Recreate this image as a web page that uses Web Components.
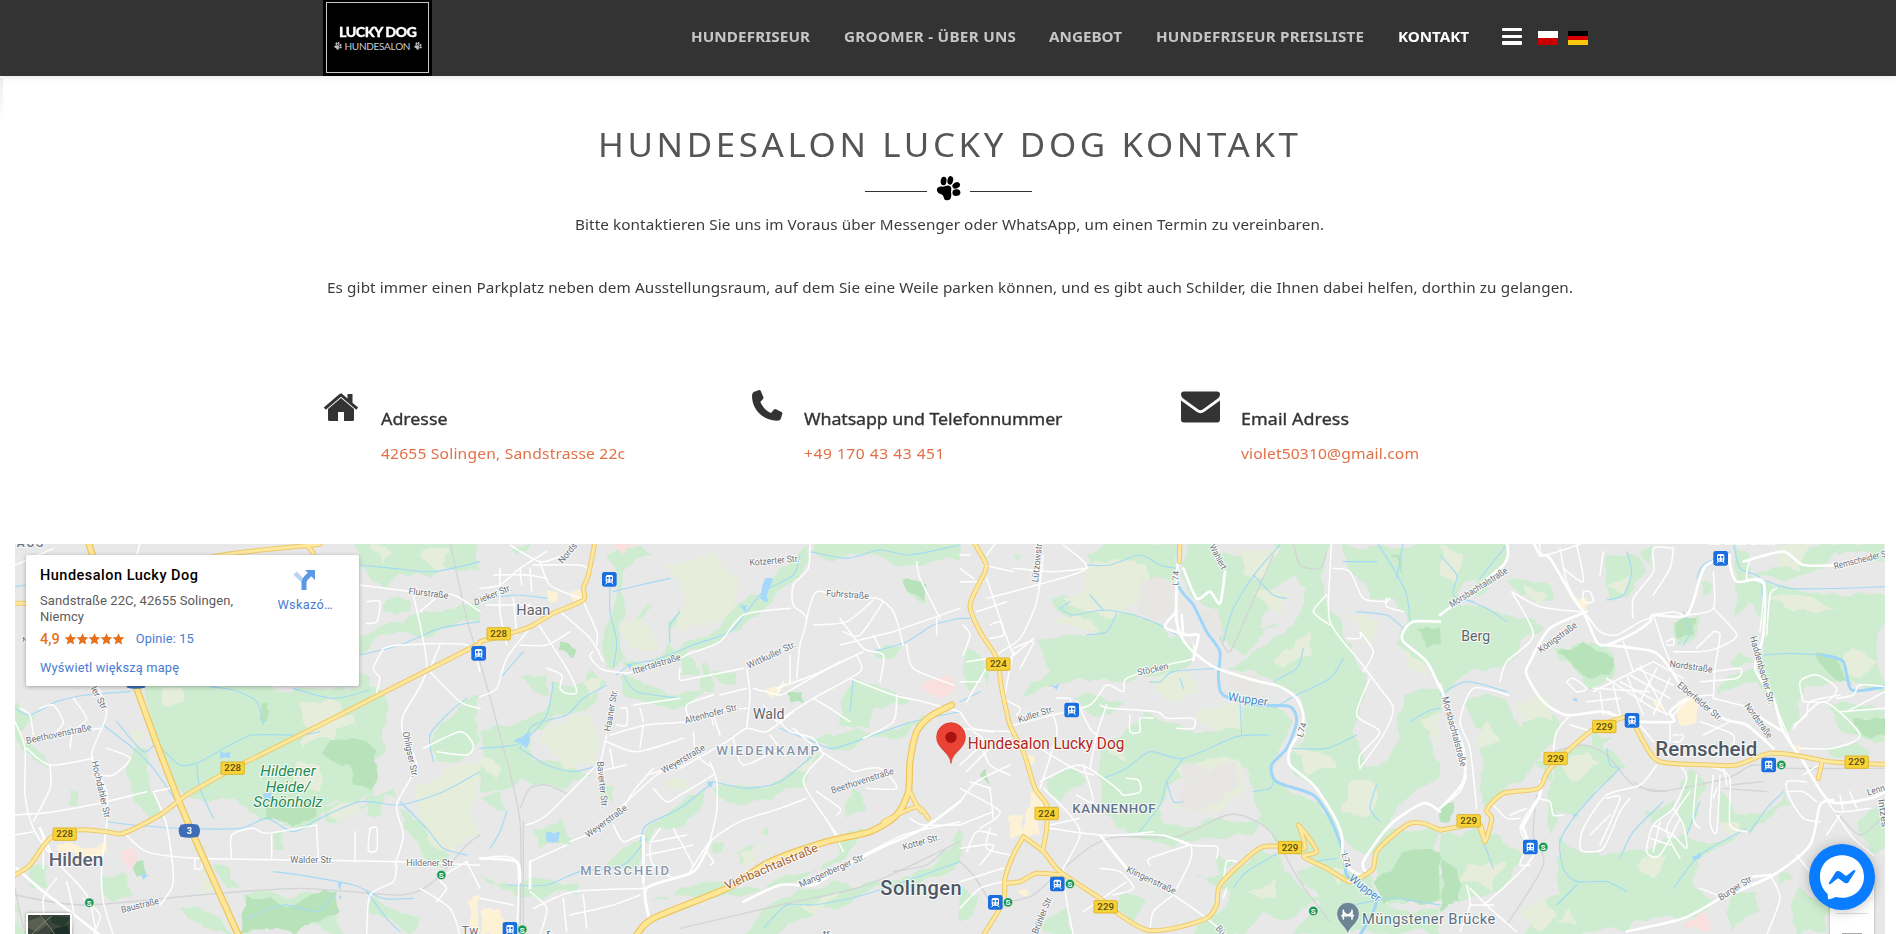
<!DOCTYPE html>
<html lang="de">
<head>
<meta charset="utf-8">
<title>Hundesalon Lucky Dog Kontakt</title>
<style>
html,body{margin:0;height:100%;overflow:hidden;background:#fff}
body{font-family:"Noto Sans","Open Sans",sans-serif;color:#333}
</style>
</head>
<body>
<salon-page></salon-page>
<script>
const define=(name,html,init)=>customElements.define(name,class extends HTMLElement{
  constructor(){super();this.attachShadow({mode:'open'}).innerHTML=html;}
  connectedCallback(){if(init)init.call(this,this.shadowRoot);}
});

/* Text run tracked out to a given width; x widens the letters themselves */
define('fit-text',`<style>:host{display:inline-block;white-space:nowrap;vertical-align:top}span{display:inline-block;transform-origin:0 50%}</style><span><slot></slot></span>`,function(r){
  const s=r.querySelector('span'),w=+this.getAttribute('w'),x=+(this.getAttribute('x')||1),n=this.textContent.length;
  const nat=s.getBoundingClientRect().width;
  s.style.letterSpacing=((w/x-nat)/(n-1))+'px';
  if(x!==1)s.style.transform=`scaleX(${x})`;
  this.style.width=w+'px';
});

define('paw-print',`<style>:host{display:block}svg{display:block;width:100%;height:100%}</style>
<svg viewBox="0 0 25 25" fill="currentColor"><ellipse cx="7.6" cy="5" rx="2.9" ry="4.3" transform="rotate(8 7.6 5)"/><ellipse cx="14.3" cy="4.4" rx="2.8" ry="4.3" transform="rotate(12 14.3 4.4)"/><ellipse cx="20.2" cy="9.4" rx="4" ry="3" transform="rotate(-28 20.2 9.4)"/><ellipse cx="20.4" cy="16.6" rx="4" ry="3.3" transform="rotate(-10 20.4 16.6)"/><path d="M1 14.5c-.6-3.4 3.2-4.3 6-3.8 2-.2 4-1.800 6.200-.9 2.700 1 2.300 3.900 1.800 6 .3 2.400.7 4.300-.4 6.800-1 2.200-5.100 2.300-6.300.3-.8-1.400-.7-3-1.800-3.900C4.700 17.700 1.500 17.500 1 14.500z"/></svg>`);

define('site-logo',`<style>:host{display:flex;width:109px;height:76px;background:#000;box-sizing:border-box;padding:2px 3px 3px}
.b{flex:1;border:1px solid #c9c9c9;display:flex;flex-direction:column;align-items:center;color:#fff;padding-top:20px}
.a{font:900 13.500px/18px Lato,sans-serif;height:16px;-webkit-text-stroke:.3px #fff}.c{display:flex;align-items:center;gap:3px;font:400 10px/14px Lato,sans-serif;color:#ccc}
paw-print{width:8px;height:8px;color:#c0c0c0}</style>
<div class="b"><div class="a"><fit-text w="78" x="1.060">LUCKY DOG</fit-text></div><div class="c"><paw-print></paw-print><fit-text w="66">HUNDESALON</fit-text><paw-print></paw-print></div></div>`);

define('site-header',`<style>:host{display:block;background:#333;height:76px;box-shadow:0 1px 6px rgba(90,60,100,.14);position:relative}
.in{display:flex;height:76px;padding-left:323px;align-items:flex-start}
nav{display:flex;gap:33.700px;margin-left:259px;padding-top:26px;font-weight:700;font-size:14.500px;line-height:21px;color:#c6c6c6}
.on{color:#fff}
.m{width:20px;display:grid;gap:3.500px;margin:28px 16px 0 33px}.m i{height:3.200px;background:#fff;border-radius:1px}
.f{width:20px;height:14px;margin:31px 10px 0 0}
.pl{background:linear-gradient(#fff 50%,#c80000 50%)}.de{background:linear-gradient(#000 33%,#d80000 33% 66%,#f9c80e 66%)}</style>
<div class="in"><site-logo></site-logo><nav><fit-text w="119" x="1.050">HUNDEFRISEUR</fit-text><fit-text w="172" x="1.050">GROOMER - ÜBER UNS</fit-text><fit-text w="73" x="1.050">ANGEBOT</fit-text><fit-text w="208" x="1.050">HUNDEFRISEUR PREISLISTE</fit-text><fit-text w="71" x="1.050" class="on">KONTAKT</fit-text></nav>
<div class="m"><i></i><i></i><i></i></div><div class="f pl"></div><div class="f de"></div></div>`);

define('page-intro',`<style>:host{display:flex;flex-direction:column;align-items:center}
h1{margin:47px 0 0;font-weight:400;font-size:32px;line-height:44px;height:44px;color:#555}
.d{display:flex;align-items:center;height:26px;margin-top:10px;padding-left:1px}.d i{width:62px;height:1px;background:#333;margin-top:3px}.d paw-print{width:25px;height:25px;color:#000;margin:-3px 9px 0}
p{margin:0;font-size:14.800px;line-height:22px;padding-left:3px;color:#3b3b3b}.a{margin-top:10px}.b{margin-top:41px}</style>
<h1><fit-text w="700" x="1.090">HUNDESALON LUCKY DOG KONTAKT</fit-text></h1>
<div class="d"><i></i><paw-print></paw-print><i></i></div>
<p class="a"><fit-text w="749" x="1.030">Bitte kontaktieren Sie uns im Voraus über Messenger oder WhatsApp, um einen Termin zu vereinbaren.</fit-text></p>
<p class="b"><fit-text w="1246" x="1.030">Es gibt immer einen Parkplatz neben dem Ausstellungsraum, auf dem Sie eine Weile parken können, und es gibt auch Schilder, die Ihnen dabei helfen, dorthin zu gelangen.</fit-text></p>`);

define('contact-item',`<style>:host{display:flex;align-items:flex-start}
.t{padding-top:18px}.h{font-size:17px;line-height:24px;-webkit-text-stroke:.35px #333;height:35px}.v{font-size:15px;line-height:22px;color:#e27046}</style>
<slot name="icon"></slot><div class="t"><div class="h"><slot name="title"></slot></div><div class="v"><slot></slot></div></div>`);

define('contact-row',`<style>:host{display:grid;grid-template-columns:429px 429px 429px;padding-left:323px;height:90px}
svg{display:block;fill:#333;flex:none}</style>
<contact-item><svg slot="icon" width="57.500" height="36" viewBox="0 0 57.500 36"><path d="M18 9 31 20v10.500a1.500 1.500 0 0 1-1.500 1.500H21V23h-6v9H6.500A1.500 1.500 0 0 1 5 30.500V20z"/><path d="m18 4 6.500 5.500V5h5v8.700l5.700 4.800-2 2.200L18 7.800 2.800 20.700l-2-2.200L16.200 5.200Q18 3.700 18 5z"/></svg><fit-text slot="title" w="66.500" x="1.050">Adresse</fit-text><fit-text w="244" x="1.040">42655 Solingen, Sandstrasse 22c</fit-text></contact-item>
<contact-item><svg slot="icon" width="52" height="36" viewBox="0 0 52 36"><path d="M3 2.500 7 1q1.200-.4 1.700.8l2.700 6.400q.4 1.200-.6 2L8.300 13q3.700 8 10.800 11l2.900-3.400q.9-1 2-.4l5.500 2.900q1.200.7.8 1.800l-1.600 5q-.5 1.300-2 1.700C11 32.600 0 20 0 7q0-3.600 3-4.500z"/></svg><fit-text slot="title" w="258.500" x="1.050">Whatsapp und Telefonnummer</fit-text><fit-text w="140.500" x="1.040">+49 170 43 43 451</fit-text></contact-item>
<contact-item><svg slot="icon" width="60" height="36" viewBox="0 0 60 36"><path d="M3 2.500h33Q39 2.500 39 5.500q0 2.300-2.500 4.200L22 20.300q-2.500 1.800-5 0L2.500 9.700Q0 7.800 0 5.500 0 2.500 3 2.500z"/><path d="M0 11.500 16 23q3.500 2.300 7 0L39 11.500V30.500q0 3-3 3H3Q0 33.500 0 30.500z"/></svg><fit-text slot="title" w="108" x="1.050">Email Adress</fit-text><fit-text w="178" x="1.040">violet50310@gmail.com</fit-text></contact-item>`);

/* ---- Map artwork: four sheets, each 1440 units wide, three units to a pixel ---- */
let seed=7;const rnd=()=>(seed=(seed*16807)%2147483647)/2147483647-.5;
const pts=s=>s.trim().split(/\s+/).map(p=>p.split(',').map(Number));
function rough(s,depth=3){
  let p=pts(s);
  for(let k=0;k<depth;k++){const q=[];p.forEach((a,i)=>{const b=p[(i+1)%p.length],dx=b[0]-a[0],dy=b[1]-a[1],r=rnd()*.34;q.push(a);if(Math.hypot(dx,dy)>16)q.push([(a[0]+b[0])/2-dy*r,(a[1]+b[1])/2+dx*r]);});p=q;}
  return 'M'+p.map(a=>a[0].toFixed(0)+','+a[1].toFixed(0)).join('L')+'Z';
}
function curve(s){const p=pts(s);if(p.length<3)return 'M'+p.join('L');let d='M'+p[0];
  for(let i=1;i<p.length;i++){const a=p[i-1],b=p[i],z=p[i-2]||a,c=p[i+1]||b,t=.13;
  d+=`C${a[0]+(b[0]-z[0])*t},${a[1]+(b[1]-z[1])*t} ${b[0]-(c[0]-a[0])*t},${b[1]-(c[1]-a[1])*t} ${b}`;}return d;}

const sheets=[
{ g:['1060,20 1440,20 1440,110 1330,90 1290,130 1200,115 1150,165 1080,90','430,455 900,455 1130,455 1160,540 1160,640 1110,700 1120,780 1000,800 960,860 880,880 780,860 700,790 620,800 545,770 500,690 450,560','1080,300 1150,270 1380,210 1440,190 1440,260 1330,280 1180,300 1080,360','1160,195 1230,195 1230,232 1150,230','1360,540 1440,480 1440,620 1380,680 1310,680 1300,600','40,500 110,540 60,590 150,700 110,680 45,590','400,640 440,640 450,760 490,850 430,830 390,760','640,990 690,1000 720,1060 680,1060','730,1080 1010,1070 1030,1200 740,1200','960,820 1190,790 1180,760 1110,800 980,860','1200,820 1290,870 1350,960 1330,1000 1260,940 1210,880','310,1020 370,1010 400,1080 340,1100 305,1080','45,1100 100,1200 45,1200','1130,1080 1260,1150 1230,1200 1100,1130','210,760 235,770 235,815 205,810','820,895 850,895 850,945 820,945','90,990 145,990 140,1060 95,1060','1095,780 1155,780 1145,842 1100,840','560,940 620,930 610,970','540,1120 640,1140 700,1200 620,1180','1050,420 1110,430 1100,500 1140,560 1060,590'],
  d:['965,655 990,615 1080,615 1130,650 1115,765 1060,750 1050,690','800,800 960,790 940,850 880,875 800,850','785,505 803,500 800,560 778,555','740,1080 1010,1070 1020,1130 940,1160 880,1200 720,1200','400,980 430,975 440,1015 410,1025'],
  b:['1260,60 1350,40 1330,120','490,460 545,455 550,500 490,510','900,500 990,480 1040,540 1000,620 930,600','1060,540 1070,570 910,640 900,625','890,680 960,690 960,770 900,770','1240,750 1440,690 1440,900 1330,950 1260,850','1110,30 1180,50 1150,90','380,560 440,600 390,640','980,830 1060,800 1090,830 1010,860','600,1010 650,1060 610,1090'],
  y:['170,930 320,915 320,950 180,955','1400,1100 1440,1080 1440,1190 1410,1180'],k:['360,950 400,940 410,980 380,1000'],
  w:['660,650 690,650 690,670 660,672','790,775 815,775 815,795 790,795','425,1015 445,1020 430,1035','1015,1040 1025,1045 1025,1090 1015,1090'],
  r:['45,520 90,540 170,500 260,480 390,470','350,560 430,650 470,630 540,690 600,680 690,630 760,600 900,600 960,590','590,690 600,760 640,850','310,570 400,640 460,700 530,800','320,860 400,870 540,880 720,880 800,850 880,890 960,850 1080,800 1200,810 1330,770 1440,710','1200,800 1280,880 1330,940 1400,960','820,1010 900,1020 1060,1050 1150,1090 1240,1090','630,455 700,465 770,500 790,570','1080,360 1200,330 1320,280 1440,260','1080,90 1180,100 1300,110 1440,80','880,460 1000,490 1110,465','1300,680 1290,600 1350,530 1400,490','45,155 80,150','740,1150 850,1110 950,1130 1000,1080','1100,1070 1160,1150 1200,1190'],
  s:['45,560 75,640 75,780 100,880 160,970 260,1080 290,1200','320,870 305,1000 310,1100 340,1200','260,390 320,530 275,660 320,770 320,870','75,620 150,600 300,580','80,640 150,690 280,670','150,690 150,760 100,860','320,640 390,670 340,720 290,720','45,840 160,830 320,800 440,770','460,770 510,760','460,770 500,870 520,1040 480,1110','370,890 440,950 590,970 930,975 1200,980 1440,990','695,970 695,900 760,880 800,895 950,870','815,900 815,970','950,875 955,970','1065,890 1065,980','1110,880 1130,880 1130,945 1105,945 1110,880','585,970 585,1000 605,1000 605,975','1240,180 1280,400 1210,540 1210,600 1250,690 1190,810 1210,900 1185,990','1080,150 1240,170 1360,180 1440,230','1280,400 1380,500 1440,520','1150,340 1200,330 1400,330 1440,410','1150,340 1120,400 1140,430 1130,475 1170,470','1190,990 1180,1040 1110,1080 1100,1200','1270,640 1380,590 1420,630 1400,660 1310,650','1310,1100 1340,1060 1320,1030 1400,980','1260,1060 1350,1120 1380,1200','1100,200 1140,200 1130,260 1100,265','1260,230 1330,170','100,600 90,540 60,520','120,520 160,510 190,560 170,590','220,490 260,550 230,580','45,90 160,40','170,1030 130,1090 140,1200','200,1040 220,1130 210,1200','250,1090 300,1140 280,1200','1400,980 1440,1060','130,900 130,1000','45,900 100,890','215,600 210,640','410,60 420,25','1320,330 1290,400'],
  S:['50,1000 130,1070 210,1130 300,1200','120,880 160,970'],
  yel:['45,1020 90,990 150,910 230,885 320,890 370,895 480,840 560,780 700,700 780,660 1000,550 1440,325','45,205 80,205','500,95 700,55 960,28','925,35 940,55','370,895 380,890'],
  Y:['265,20 290,100 410,460 550,830 715,1200'],
  rail:['45,1080 250,1110 600,1080 900,1060 1200,1080 1300,1040 1400,930 1440,900','1350,20 1400,250 1440,380','45,1060 70,1180'],
  t:[['N',75,320,20,0,24],['Flurstraße',1284,184,120,7],['Beethovenstraße',178,606,200,-12],['ler Str.',290,495,80,62],['Hochdahler Str.',295,768,180,77],['Ohligser Str.',1222,660,140,78],['Walder Str.',936,985,130,0],['Hildener Str.',1292,992,146,0],['Baustraße',422,1120,116,-14],['Hilden',228,994,164,0,53,'#5b6270',500],['Hildener',864,724,166,0,43,'#1f8a54','i'],['Heide/',864,770,134,0,43,'#1f8a54','i'],['Schönholz',864,817,208,0,43,'#1f8a54','i'],['AUS',90,36,80,0,36,'#6c7480',500],['Tw',1410,1200,50,0,36],['D',1432,210,16,-10]],
  sh:[[698,699,'228'],[194,897,'228']],au:[[568,887,'3'],[408,440,'']],tr:[[1436,355]],sb:[[1324,1020],[268,1103]]
},
{ g:['20,20 170,20 110,60 90,30','380,60 480,30 520,60 430,110 420,170 440,230 420,300 440,370 380,400 370,300 400,220','420,380 560,350 700,290 770,210 860,170 900,100 990,30 960,120 870,210 790,270 700,330 560,380 480,400','0,590 120,560 200,520 210,440 280,460 330,400 380,440 340,510 220,540 150,600 160,680 280,700 340,720 260,760 120,730 0,770','420,420 560,480 680,460 640,500 500,505 430,480','1000,20 1440,20 1440,75 1300,90 1190,60 1060,80 1000,50','1265,130 1340,150 1335,210 1290,180','560,260 600,215 570,330 600,350 540,370','1130,430 1290,500 1180,520 1170,580 1080,570','700,760 860,760 960,700 1020,650 970,760 880,790 740,800','1000,620 1130,580 1280,560 1400,520 1280,600 1120,640','580,820 680,760 660,830 520,880 490,960 450,1010 380,990 460,920','160,880 240,850 280,920 180,940','500,1100 600,1060 700,1040 1000,1010 1080,950 1070,910 1150,880 1040,1000','880,1100 960,1060 1140,1060 1300,1020 1420,930 1440,880 1440,980 1300,1060 1100,1110 960,1150 890,1200 790,1200','1100,800 1120,760 1160,820 1100,850','0,1020 100,1050 300,1050 290,1080 60,1060','590,350 640,370 660,420 600,420','690,410 770,410 770,450 740,450','1180,340 1270,330 1240,370 1190,370','500,210 530,200 480,270 465,265','120,420 200,420 210,480 150,450','770,950 820,930 810,990 780,985','700,920 730,920 725,950 700,955','360,740 400,750 400,800 370,800','0,790 60,770 80,830 30,810','850,880 865,880 865,900 850,900','670,380 690,400 700,470 660,460'],
  d:['240,320 290,345 280,370 235,345','1270,135 1340,150 1335,200 1290,175','920,470 965,470 970,505 930,500'],
  b:['550,90 700,50 780,150 740,240 600,290 620,200','170,620 330,540 360,620 350,690 250,700','430,260 480,250 540,330 450,340','1330,0 1400,30 1420,40','310,440 370,430 330,490','560,740 600,730 630,760 570,760','940,700 1000,650 1020,640 970,710','780,950 850,920 820,990 790,990','0,670 60,690 50,740','1330,690 1360,690','920,1100 1080,1070 1000,1140'],
  y:['270,170 320,170 320,200 280,200','200,165 230,170 230,200 210,200','850,465 940,440 870,490','0,1130 60,1120 100,1200 0,1200'],k:['1330,440 1410,420 1430,460 1380,490 1320,460','380,20 480,20 430,60'],
  w:['855,130 880,130 865,200 840,190','780,210 800,210 795,230','200,890 240,890 235,920 200,920','440,385 455,390 450,405','100,620 150,590 140,640','680,740 700,740 690,760'],
  r:['960,60 940,120 850,170 800,230 750,290 640,330 540,370 450,390 410,420','390,150 390,230 410,320 400,400','570,130 480,150 400,170','120,640 160,570 260,540 310,490 380,450','120,640 200,690 280,710 360,690','0,640 120,625 200,540 220,440','430,420 470,470 600,490','1440,250 1360,270 1280,320 1180,350','1120,430 1110,530','1440,530 1300,560 1180,600 1060,640 1000,620 900,580','700,740 800,760 900,740 1000,660','700,740 600,820 500,870 480,920','500,910 430,990 300,1010 200,1050 80,1050','1440,980 1330,1020 1150,1080 1000,1110 920,1110 850,1180','20,190 110,180 200,190','130,350 60,430','990,50 1100,70 1200,45 1290,60 1440,30','600,230 570,270 570,320','80,830 60,890 30,940'],
  s:['0,160 60,150 120,100 200,50','160,90 300,90 330,110','180,80 210,150 300,190','90,30 180,80 250,60','240,230 330,310 370,380','310,200 350,290 350,330','340,350 330,360 340,380 370,405 440,415','0,485 50,460 80,370 150,280','120,330 200,330 270,290','170,260 260,400 290,470 260,475 240,460 245,420 200,400','120,100 125,150','150,100 155,170','60,100 60,230 80,330','100,190 110,300','20,210 150,210','40,120 140,120 200,130','600,400 600,435 640,430 790,400','440,415 540,390 600,370 630,355','630,355 720,320 790,240 930,220','990,20 985,100 940,150 940,210 980,250 960,330 950,430','980,250 1010,170 1100,190 1190,190 1240,230 1270,330','1180,195 1100,260 1000,270','1080,330 1240,290','1240,290 1440,220','1080,250 1150,340 1210,360 1200,440','1210,200 1140,300 1090,290','1130,360 1140,410 1000,490 890,560','890,460 1000,420 1150,350','1110,430 1240,480 1330,500 1440,530','800,400 810,480 800,580','390,600 500,570 620,560 700,530 800,520','380,600 360,690','600,700 740,620 800,580 860,590 940,530','500,720 600,690','940,580 1010,640 1120,710','900,560 930,590 1000,610 1030,660','1030,660 970,740 1050,870 1090,950','350,690 200,840 140,870','440,690 350,710','520,700 460,770 430,820','270,920 360,880 440,800 530,720 590,690','0,970 110,980 110,1200','150,980 260,930','400,870 430,920 490,905 490,1040 510,1160','630,1010 690,920 780,860 900,820 980,790','540,880 510,930 520,990 580,1030','520,920 620,900','500,960 640,930','580,880 640,990','1440,860 1350,880 1270,900 1150,960','690,680 710,740 710,830 690,920','520,760 560,800 600,780 700,720','760,610 790,690 900,640','640,590 650,660 700,700','820,460 900,480 940,460 1080,380','890,480 910,440','930,360 930,440','690,530 700,570','720,480 800,460','420,520 440,520 440,570 410,570','480,520 490,560','1440,870 1330,870 1290,850','1050,870 1080,910','1010,770 1080,820 1070,840','1250,480 1240,560 1150,610','1120,710 1200,700 1250,760 1160,760','1110,560 1050,520 1000,490','1280,330 1300,400 1420,450','1310,80 1320,130 1380,250','150,1070 200,1120 180,1200','250,1090 260,1190','310,1080 320,1180','160,1120 280,1070 500,1060','100,1110 0,1090','270,1140 400,1110 480,1080','700,540 720,600','460,510 600,490','630,560 620,510 700,480','380,620 470,650 610,610','390,640 400,700','490,570 480,640','680,950 700,980 690,990','850,510 890,560','870,600 900,640','1370,250 1370,300','1180,300 1200,340'],
  S:['510,1160 500,1060 640,1010 690,920','490,905 490,1040','0,970 110,980 120,1040','790,1100 900,1050 1000,1050 1080,1000 1200,940 1330,880 1440,800','150,980 150,1060'],
  yel:['0,320 90,295 150,275 220,235 310,195 310,160 325,120 345,20'],
  Y:['470,1200 520,1150 740,1060 870,980 1040,920 1170,890 1250,840 1285,770 1290,680 1310,590 1350,545 1415,510'],
  Yl:['1210,860 1310,815 1345,850','1290,770 1310,810 1325,830'],
  rail:['0,380 60,600 120,860 120,1200','130,860 130,1200','600,1180 900,1110 1160,1050 1440,920','1240,1010 1340,990 1400,940','120,820 150,760 200,750 260,775'],
  t:[['Nords',270,60,70,-50],['ieker Str.',50,184,100,-22],['Kotzerter Str.',884,86,150,-5],['Fuhrstraße',1102,188,128,4],['Ittertalstraße',532,396,150,-17],['Wittkuller Str.',878,368,158,-25],['Haaner Str.',402,528,126,-80],['Altenhofer Str.',697,545,166,-15],['Weyerstraße',614,680,146,-30],['Beethovenstraße',1150,746,196,-18],['Baverter Str.',358,750,140,84],['Weyerstraße',384,866,146,-36],['Mangenberger Str.',1060,1015,214,-24],['Kotter Str.',1326,930,114,-16],['Viehbachtalstraße',878,1006,300,-23,35,'#a0612d'],['Haan',160,241,102,0,43,'#5d646d'],['Wald',866,551,94,0,43,'#5d646d'],['WIEDENKAMP',863,660,308,0,40,'#8896ab',500],['MERSCHEID',434,1020,266,0,39,'#8896ab',500],['r.',212,1202,24,-10],['tr.',1045,1204,30,-10]],
  sh:[[56,296,'228']],tr:[[388,133],[90,1183]],sb:[[127,1184]]
},
{ g:['380,60 530,20 640,20 650,160 590,130 480,140 400,100','680,20 960,20 1110,20 1040,60 1010,120 930,170 900,280 960,270 860,360 780,310 760,220 700,190','270,190 420,230 580,260 630,310 700,330 690,390 540,420 470,440 360,430 240,460 180,500 270,410 230,320 310,300 420,300 330,250','940,20 1110,30 1080,120 1100,210 1150,300 1220,420 1200,520 1180,600 1220,700 1290,660 1310,560 1330,480 1440,460 1440,720 1330,800 1290,860 1230,960 1160,920 1080,760 1000,720 990,660 1040,560 1020,480 950,460 800,400 870,360 1000,270 1040,160','1140,20 1440,20 1440,450 1400,390 1310,330 1340,240 1300,190 1230,190 1170,110','420,640 560,530 700,590 830,560 860,490 950,510 1000,560 960,640 930,700 980,760 1080,800 1130,900 1150,1000 1030,960 900,860 860,700 700,720 620,770 600,860 480,880 410,830','470,860 620,870 740,850 900,850 880,900 640,940 520,910','700,1020 900,940 960,960 1080,1090 1000,1150 870,1130 830,1070','1010,1010 1240,1030 1300,1120 1440,1120 1440,1200 1000,1200 1080,1110','1240,960 1300,880 1440,880 1440,1100 1290,1110','0,1050 60,1080 40,1140 0,1160','340,490 500,500 450,540 380,530','20,340 60,360 70,420 30,470 10,420','260,730 340,700 380,740 300,800','480,1080 560,1100 520,1160 480,1130','820,1050 960,980 920,1080 850,1200 700,1200 780,1130','140,40 190,60 170,80','610,350 640,335 640,370 620,380','770,960 820,980 790,1030','240,1180 330,1120 340,1190','80,370 100,380 80,450'],
  d:['1240,1040 1330,950 1440,950 1440,1090 1340,1100 1270,1110','1290,60 1320,60 1330,120','1370,280 1440,280 1440,330 1400,340','60,720 80,700 90,750'],
  b:['400,80 560,90 600,200 480,220 360,180','310,190 420,170 520,230 400,230','840,40 960,40 910,130 850,120','880,170 990,180 960,240','940,380 1050,290 1060,360 970,400','560,430 680,410 720,470 660,500 590,470','730,520 830,500 850,590 700,560','650,700 840,680 860,760 740,830 640,820 700,750','990,620 1080,650 1130,700 1040,720','1160,240 1250,260 1230,330','1380,560 1440,530 1440,640','1170,740 1240,740 1230,840 1140,830','860,1070 960,1020 950,1090','1330,340 1390,380 1400,430 1340,400','1100,1010 1160,1000 1140,1050','280,260 350,240 420,290','440,640 480,620 500,680'],
  e:['540,130 640,150 620,250 540,240','660,690 830,680 840,750 720,830 650,810','830,420 910,430 900,500 790,480','730,220 770,220 790,300 740,280'],
  y:['210,770 250,790 240,900 190,910 195,850','140,850 190,840 190,900 150,910','195,660 225,665 215,690','170,1070 205,1065 200,1085'],k:[],
  w:['270,450 300,445 290,465'],
  R:['655,30 655,150 700,210 740,290 780,350 775,420 790,480 900,510 990,515 1010,560 980,640 935,690 950,740 1060,780 1110,850 1150,950 1160,1020 1210,1060 1250,1080 1240,1130 1200,1200'],
  r:['380,90 450,90 540,60 600,90 650,100','300,220 340,240 430,225 520,240 600,270 650,300','390,180 430,225','470,235 440,290 380,300','300,220 330,200','960,30 890,110 820,220 790,320','880,120 940,180 980,190','430,730 500,700 570,650 670,670 830,605 930,600','670,670 620,740 600,810 530,900','620,740 640,800 670,800','840,500 845,600','1000,640 1100,640 1190,600','1250,20 1300,100 1340,180 1350,260','1310,130 1330,20','1150,80 1250,80','1150,370 1110,430 1010,480 940,520','1030,340 1010,400 940,440','1190,230 1280,240 1330,280','570,440 600,440 640,410 770,400','670,460 660,430','820,1060 860,1010 980,940','1060,980 1130,970','1180,1110 1300,1090 1440,1110','1250,750 1230,820 1260,860','0,500 60,470','880,770 930,760 940,740','1440,520 1400,530 1350,560','0,250 30,250'],
  s:['250,60 230,200 180,310 100,370 20,500','130,500 160,350','160,100 280,110 380,100','70,90 160,110','310,30 380,100 230,150 80,190','80,130 130,280 160,360','110,20 80,60','700,330 700,370 620,390 500,430 490,470 440,450 390,510 280,540 160,570','280,540 290,600 240,760','290,490 330,490 330,510','420,510 450,520 590,530 620,550 700,550 700,580 650,580','510,540 510,590 540,590 540,550 580,550','440,510 410,600 390,700','350,500 390,580 410,600','1115,20 1110,110 1110,260 1200,380 1260,460 1300,520 1270,600 1200,700','1120,100 1170,110 1210,190 1280,200','1100,180 1060,230 1110,270','1230,430 1190,540 1260,590 1200,660 1200,700','1200,290 1200,310 1160,310','1200,290 1240,350 1210,410','1280,190 1280,215 1330,230','1280,200 1290,190','0,530 40,580 150,590','0,760 120,830 60,880','0,800 50,740 150,690','20,710 90,640 150,610','60,620 90,690 150,720','0,870 100,830','110,900 50,890 20,950','100,850 90,760','0,940 100,930 60,990','0,1040 130,1000','0,1120 60,1060 130,1040','30,740 90,760','90,880 80,940 150,960','0,580 100,590','40,590 70,620 0,690','240,740 360,690 470,760 490,780 540,770 535,735 500,730','240,640 340,700 400,720','250,760 330,840 360,900 310,1000','270,880 420,900 600,900 690,930 770,935 770,970','420,900 500,1000 640,1080 740,1150 800,1200','490,900 580,890','610,900 690,930 690,980 650,1060','570,990 570,970 690,930','310,1000 320,1100 340,1200','420,1000 480,1010 520,1060 460,1080','360,850 270,870','0,60 30,60','0,100 40,130','70,140 0,140','10,270 30,300 10,360','90,270 120,260 130,300 90,310','50,230 140,200','570,1190 580,1130 640,1080','350,780 400,800 370,690','370,1130 500,1040','790,1090 800,1060','20,380 90,370','0,440 60,440','130,490 180,520 170,540','160,340 220,320 180,400','150,370 220,310','830,980 800,980 790,1040'],
  S:['655,50 650,150 650,260 680,330 760,395 880,435 960,455 1010,490 1030,540 1020,590 990,640 990,690 1060,750 1120,840 1145,900 1150,970 1180,1010 1220,1020 1210,980 1290,870 1390,805 1440,830','650,230 615,275 680,300 715,300 705,350 700,375','665,240 670,300','670,100 710,190 750,170 780,205 795,110','1440,260 1360,260 1330,290 1330,320 1400,380 1440,460','420,900 500,1000'],
  yel:['40,20 75,80 75,110 30,210 60,290 110,370 125,460 150,570 190,650 225,760 260,810 260,880 250,940','190,905 250,950 300,1010 420,1090 480,1140 560,1185 640,1180 740,1150 770,1110 780,1050 860,970 910,935 990,935','190,905 160,960 135,1030 130,1100 70,1200','135,1045 180,1040 230,1015 300,1020','1015,870 1040,900 1070,950 1030,965 1100,1000 1170,1040 1215,1020 1240,1000 1250,950 1300,900 1350,865 1390,865 1440,885','660,20 658,80','1020,880 1035,940 990,935'],
  rail:['150,1100 220,1080 310,1000 400,930 480,905 650,905 800,840 870,850 940,900 1020,1040 1110,1160','1000,20 1020,90 1080,100 1100,50','780,310 810,350 860,240 940,60','0,980 40,1020 90,1100'],
  t:[['Lützowstr',240,84,118,-84],['Wahlert',766,70,80,62],['L74',656,130,44,-85,26],['Stöcken',580,412,94,-12],['Kuller Str.',230,547,110,-18],['Wupper',862,505,120,8,36,'#4a86c5'],['L74',1034,587,44,-72,26],['L74',1150,978,44,75,26],['Wupper',1208,1068,110,38,34,'#4a86c5'],['Klingenstraße',570,1044,160,25],['Brühler Str.',255,1143,120,-68],['Bü',775,1192,28,50],['KANNENHOF',462,835,250,0,40,'#65728a',500],['Hundesalon Lucky Dog',258,641,470,0,47,'#b3261e',400]],
  sh:[[115,387,'224'],[260,835,'224'],[437,1115,'229'],[990,937,'229']],tr:[[335,525],[292,1047],[106,1102]],sb:[[330,1047],[144,1102],[1060,1128]]
},
{ g:['0,20 200,20 190,110 100,190 110,130 30,180 0,170','0,230 80,210 250,250 310,280 240,330 220,370 150,400 60,430 20,480 0,440','200,140 330,150 340,200 240,180','70,500 130,480 200,490 250,580 190,620 110,580','140,640 300,500 360,570 340,620 200,760 130,820','120,640 180,620 160,740 130,800','340,340 430,320 520,360 520,430 440,460','500,60 590,60 620,110 560,190 510,200 500,120','600,50 640,30 640,110','700,260 780,240 770,300 710,330','880,20 930,60 930,120 1030,150 1150,180 1260,170 1335,180 1335,480 1280,460 1180,440 1100,450 1080,560 1040,600 980,500 950,440 880,460 830,480 870,420 950,380 960,250 930,200 880,240','940,120 1150,20 1190,30 1120,110','1130,20 1335,20 1335,80 1200,60','0,890 120,880 180,900 250,960 200,1040 60,1100 0,1000','340,650 520,650 560,700 460,780 420,850 350,830 330,900','280,680 330,680 330,740','360,900 420,950 480,960 620,950 740,900 930,880 780,970 760,1050 840,1100 740,1150 560,1190 240,1200 360,1080 350,980','840,760 880,830 980,830 1030,770 1050,810 930,900 840,860','750,700 800,760 760,860 740,900','610,830 710,790 640,870','780,140 820,150 790,190','1020,1010 1060,1030 1020,1050','1080,1050 1170,1100 1160,1190 1070,1200','880,1080 950,1070 960,1130 870,1190','1150,640 1250,620 1290,660 1190,670','870,380 900,350 940,380 890,400','1160,520 1335,530 1335,620 1250,600','450,590 520,610 470,650','1250,860 1335,810 1335,940 1300,960'],
  d:['350,350 430,320 520,370 510,420 460,430','1130,350 1190,370 1240,450 1200,440','1240,550 1335,550 1335,600 1290,610','0,960 50,1000 60,1100 0,1130','710,260 770,250 760,300 710,310','0,810 40,800 30,860 0,860'],
  b:['970,190 1080,180 1190,220 1060,230','220,500 320,480 340,560 250,560','1210,360 1240,340 1310,380 1250,430','990,20 1130,20 1080,110 1020,100','360,680 440,650 480,680 400,740','80,990 200,980 160,1070 60,1040','240,1120 310,1090 350,1140 300,1190','0,30 70,60 50,150 0,120','250,150 320,180 290,210','100,640 140,560 180,620','590,990 680,960 640,1030','820,860 900,870 890,900','500,150 570,120 550,190','350,1160 390,1120 410,1170'],
  y:['400,190 440,190 435,230 420,230','710,500 780,490 770,560 720,570','640,500 665,500 660,530','1060,630 1080,630 1080,650'],k:['730,1170 790,1130 810,1190','1250,360 1280,360'],
  w:['400,835 410,840 400,855','755,965 780,950 780,970 760,975','400,490 412,490 412,498 400,498'],
  R:['1150,360 1210,380 1235,465 1335,455'],
  r:['0,60 50,120 40,180 100,200','120,130 200,30','70,190 140,220 200,260','560,50 575,110 550,180 500,195','880,20 900,100 960,130 970,240','960,130 1050,160 1200,160 1335,155','730,230 750,290 730,330','970,360 1050,355 1150,360','540,700 460,780 400,850 360,920 370,1000 410,1040 500,1040 560,1070','670,800 580,890 540,970','920,880 780,960 700,1060','1030,770 980,820 930,890','780,800 740,900','130,920 160,1000','410,1050 350,1110','770,130 790,90 870,50','500,640 510,690 540,700','0,480 80,440 200,470'],
  s:['215,170 280,300 200,380 180,440','215,170 300,215 420,230','205,480 100,460 60,560 90,640 110,820','360,40 380,140 410,200','370,100 430,140 410,30','430,170 430,200 460,200 450,170 430,170','440,240 480,290 530,300 600,260 630,250','700,40 640,40 640,110 580,190 580,250','640,180 690,100 700,40','820,110 820,220 740,240','730,240 700,230 640,240','640,240 670,330 690,380','680,320 700,310 700,330 680,330','820,220 890,300 830,340 780,350 700,350','820,290 840,300 825,400 820,490','770,340 820,290','820,410 900,400 890,430 780,440','640,380 540,430 460,470','550,320 580,410','500,430 640,520 700,540','460,460 630,470','560,420 610,540','600,390 680,540','640,380 730,430','520,450 540,540','480,470 490,540','440,500 540,490','590,400 700,450','570,420 690,490','540,440 650,500','650,400 600,500','690,430 640,540','460,530 510,530','380,440 400,430 440,460 410,470 380,440','390,540 350,590 340,650','390,570 460,590','600,570 640,620','690,560 690,620','700,600 730,600 720,620 700,620','780,560 880,600 870,650','790,600 870,560','820,490 900,510 940,520','700,540 750,490 820,480','300,750 300,790 330,800 340,840 370,840','160,810 200,850 240,850','210,840 260,820','300,780 240,880 280,960 200,1050 130,1110','250,960 240,990 270,990','80,1050 90,1110 60,1190','90,1060 150,1120 230,1190','90,1110 160,1110','650,690 600,750 500,780 430,880 420,940 440,950 490,940 540,830 570,790','500,790 540,790 480,930','450,900 510,840','720,690 740,730 700,820 640,870 620,950 660,960 720,850','640,870 700,900','630,910 690,930','660,860 640,950','700,820 730,870 740,940 700,900','750,770 680,880 720,970','830,700 870,730 870,870 920,890','820,720 810,860 830,890 840,720','770,720 760,850 780,880','1060,580 1150,500 1260,600 1180,640 1080,640','1090,500 1080,440 1130,420 1190,460 1160,500 1090,500','1010,520 1060,640','1060,570 1100,540 1110,500 1200,480','1335,470 1220,530','1200,530 1335,520','1190,490 1240,480 1260,450 1335,455','1150,680 1090,720','1100,740 1040,740 1050,790 1090,850 1140,860','1040,770 1090,770 1130,800','1160,790 1190,830 1290,820','1200,780 1210,830','1230,770 1250,820','1190,840 1240,910 1300,960','1200,840 1160,900','990,1020 1020,1090 980,1200','1070,960 1110,1010','780,1060 860,1090','1010,160 990,180 980,300','930,70 920,130 970,150 960,290','820,700 850,700 860,750','300,0 310,60 440,20','0,820 60,770 80,720','830,760 820,790','480,120 490,50'],
  S:['200,20 190,90 0,240','280,20 300,60 330,70 400,190 430,230 470,320 500,330 570,300 630,260 640,240 740,240 780,130 800,90 870,60','440,230 330,280 270,380 260,420 310,500 380,540 480,530 540,545','500,330 640,350 690,400 720,450','720,460 850,550 920,570 1000,640','870,60 870,90 890,140 970,140 970,300 945,400 1000,490 1030,590 1090,680 1170,800 1290,790 1335,770','910,80 1030,50 1090,90 1200,90','840,1090 1000,1020 1110,930 1140,810 1180,795','560,1190 730,1150 840,1090','1030,590 980,560 920,520','0,450 30,540 70,640 70,740 0,820','590,560 700,560 690,530 740,490','245,880 300,780 300,740','250,880 280,960','990,1020 940,1025'],
  yel:['0,885 60,875 120,870 135,920 155,850 140,825 190,775 295,760 330,700 450,590 540,550 575,555 610,620 660,680 820,690 890,690 990,655 1090,665 1170,680 1335,688','1145,685 1135,730','120,880 135,920'],
  rail:['580,740 650,770 860,730 940,690 1060,700 1335,700','340,650 430,630 500,660 580,750 680,770','290,780 280,900 310,990 200,1170','850,760 980,770','870,750 970,740','1190,830 1260,900 1335,840'],
  t:[['arenbach',905,28,200,0,38],['Remscheider S',1262,84,160,-14],['Morsbachtalstraße',120,165,200,-32],['Berg',107,319,86,0,42,'#5d646d'],['Königstraße',358,315,136,-36],['Nordstraße',752,404,130,8],['Elberfelder Str.',774,507,166,40],['Haddenbacher Str.',958,408,210,74],['Nordstraße',948,562,122,54],['Morsbachtalstraße',34,592,216,75],['Remscheid',799,663,306,0,59,'#4e5663',500],['Burger Str.',892,1066,118,-32],['Lenn',1310,774,54,-16],['Intzes',1320,835,84,82]],
  sh:[[493,574,'229'],[347,670,'229'],[86,857,'229'],[1250,681,'229']],tr:[[842,70],[576,556],[986,690],[271,936]],sb:[[1024,690],[310,936]]
}];

define('map-canvas',`<style>:host{display:block}svg{display:block;width:100%;height:100%;font-family:Roboto,sans-serif}path{fill:none;stroke-linecap:round;stroke-linejoin:round}
.g{fill:#ceedd0}.d{fill:#b8e2ba}.b{fill:#e6eedb}.e{fill:#e8e6e3}.y{fill:#fdf1d6}.k{fill:#f9dfdd}.w{fill:#a5d8fb}
.r{stroke:#a4daf4;stroke-width:3.500}.R{stroke:#9fd6f7;stroke-width:9}.s{stroke:#fff;stroke-width:4.500}.S{stroke:#fff;stroke-width:8}
.c{stroke:#edc96b;stroke-width:15}.l{stroke:#fde8a0;stroke-width:9}.C{stroke:#edc45c;stroke-width:21}.L{stroke:#fde696;stroke-width:14}.rail{stroke:#d2d4d5;stroke-width:4}
text{text-anchor:middle;paint-order:stroke;stroke:#fff;stroke-width:6px;stroke-linejoin:round;stroke-opacity:.85}.n{stroke:none}</style><div style="width:100%;height:100%"></div>`,function(r){
  const each=(k,f)=>sheets.map((s,i)=>`<g transform="translate(${i*1440},0)">${(s[k]||[]).map(f).join('')}</g>`).join('');
  const fill=k=>each(k,p=>`<path class="${k}" d="${rough(p,k=='w'||k=='y'?2:4)}"/>`);
  const line=(k,c)=>each(k,p=>`<path class="${c||k}" d="${curve(p)}"/>`);
  let o='<rect x="45" y="27" width="5610" height="1170" fill="#e8e8e8"/>';
  o+=fill('g')+fill('b')+fill('e')+fill('d')+fill('y')+fill('k')+fill('w')+line('rail')+line('r')+line('R')+line('s')+line('S');
  o+=line('Yl','c')+line('yel','c')+line('Y','C')+line('Yl','l')+line('yel','l')+line('Y','L');
  o+=each('t',([t,x,y,w,a,f=28,c='#6b727b',st])=>`<text transform="translate(${x},${y}) rotate(${a})" textLength="${w}" lengthAdjust="${w>f*t.length*.68?'spacing':'spacingAndGlyphs'}" font-size="${f}" fill="${c}" ${st=='i'?'font-style="italic"':`font-weight="${st||400}"`}>${t}</text>`);
  o+=each('sh',([x,y,t])=>`<rect x="${x-35}" y="${y-18}" width="70" height="37" rx="3" fill="#f7d338" stroke="#dcb52c" stroke-width="3"/><text class="n" x="${x}" y="${y+10}" font-size="29" textLength="50" font-weight="500" fill="#5a4a10">${t}</text>`);
  o+=each('au',([x,y,t])=>`<path style="fill:#3e6db5" d="M${x-26},${y-18}Q${x},${y-24} ${x+26},${y-18}Q${x+38},${y} ${x+26},${y+18}Q${x},${y+24} ${x-26},${y+18}Q${x-38},${y} ${x-26},${y-18}"/>${t&&`<text class="n" x="${x}" y="${y+10}" font-size="27" font-weight="700" fill="#fff">${t}</text>`}`);
  o+=each('tr',([x,y])=>`<g transform="translate(${x},${y})"><rect x="-22" y="-22" width="44" height="44" rx="7" fill="#1a6fe0"/><rect x="-11" y="-13" width="22" height="23" rx="5" fill="#fff"/><path d="M-11 14l5-6M11 14 6 8" style="stroke:#fff;stroke-width:3"/><path d="M-8-7H-2V0H-8zM2-7H8V0H2z" style="fill:#1a6fe0"/><circle cx="-5" cy="5" r="2" fill="#1a6fe0"/><circle cx="5" cy="5" r="2" fill="#1a6fe0"/></g>`);
  o+=each('sb',([x,y])=>`<circle cx="${x}" cy="${y}" r="14" fill="#159653" stroke="#dff0e4" stroke-width="2"/><text class="n" x="${x}" y="${y+9}" font-size="24" font-weight="700" fill="#fff">S</text>`);
  o+=`<text x="2763" y="1079" font-size="60" textLength="244" font-weight="500" fill="#4e5663">Solingen</text>
  <text x="4286" y="1168" font-size="44" textLength="400" fill="#5c7084">Müngstener Brücke</text>
  <path style="fill:#6c8494;stroke:#fff;stroke-width:2" d="M4043 1198c-4-24-33-34-33-62a34 34 0 0 1 68 0c0 28-29 38-35 62z"/><path d="M4030 1126v26M4056 1126v26M4026 1142h34M4030 1130q13 20 26 0" style="stroke:#fff;stroke-width:5"/>
  <path style="fill:#ea4335;stroke:#d0342a;stroke-width:2" d="M2853 684c-4-34-43-42-43-78a43 43 0 0 1 86 0c0 36-39 44-43 78z"/><circle cx="2853" cy="607" r="17" fill="#a8130f"/>`;
  r.querySelector('div').innerHTML=`<svg viewBox="45 27 5610 1170" preserveAspectRatio="none">${o}</svg>`;
});

define('place-card',`<style>:host{display:block;width:333px;height:131px;background:#fff;border-radius:2px;box-shadow:0 1px 4px rgba(0,0,0,.3);font-family:Roboto,sans-serif;box-sizing:border-box;padding:12px 14px 0 14px}
.r{display:flex;justify-content:space-between}.n{font-weight:500;font-size:14.500px;line-height:18px;color:#000;height:26px}.a{font-size:13px;line-height:16px;color:#5b5b5b}
.s{display:flex;align-items:center;margin-top:5px;height:18px;color:#e7711b}.s b{font-weight:500;font-size:14.500px;margin-right:4px}.s svg{width:61px;height:12px;fill:#e7711b;margin-right:11px;margin-bottom:1px}
.l{color:#4a7bd0;font-size:12.800px;line-height:16px}.m{margin-top:12px}.w{width:56px;margin-right:12px;text-align:center;padding-top:3px}.w svg{display:block;margin:0 auto 7px}</style>
<div class="r"><div><div class="n"><fit-text w="158">Hundesalon Lucky Dog</fit-text></div><div class="a"><fit-text w="193">Sandstraße 22C, 42655 Solingen,</fit-text><br><fit-text w="44">Niemcy</fit-text></div></div>
<div class="w l"><svg width="22" height="20" viewBox="0 0 22 20"><path d="M1 3 9 11" stroke="#b9d3f5" stroke-width="4.500" fill="none"/><path d="M10 20V13Q10 10 12 8L16 4" stroke="#5c98e8" stroke-width="5" fill="none"/><path d="M11 0h10v10z" fill="#5c98e8"/></svg><fit-text w="55">Wskazó…</fit-text></div></div>
<div class="s"><b>4,9</b><svg viewBox="0 0 60 12"><defs><path id="s" d="m6 .2 1.700 3.900 4.200.4-3.200 2.800 1 4.300L6 9.400 2.300 11.600l1-4.300L.1 4.500l4.200-.4z"/></defs><use href="#s"/><use href="#s" x="12"/><use href="#s" x="24"/><use href="#s" x="36"/><use href="#s" x="48"/></svg><span class="l"><fit-text w="58">Opinie: 15</fit-text></span></div>
<div class="l m"><fit-text w="139">Wyświetl większą mapę</fit-text></div>`);

define('salon-map',`<style>:host{display:block;position:relative;width:1870px;height:390px;overflow:hidden}
map-canvas{width:1870px;height:390px}place-card{position:absolute;left:11px;top:11px}
.sat{position:absolute;left:11px;top:369px;width:42px;height:40px;border:2px solid #fff;border-radius:2px;box-shadow:0 0 3px rgba(0,0,0,.4);background:#3c463c;overflow:hidden;box-sizing:content-box}
.z{position:absolute;left:1815px;top:330px;width:44px;height:80px;background:#fff;box-shadow:0 1px 3px rgba(0,0,0,.25)}.z i{position:absolute;left:6px;right:6px;top:39px;height:1px;background:#ddd}.z b{position:absolute;left:12px;top:59px;width:20px;height:2px;background:#aaa}</style>
<map-canvas></map-canvas><place-card></place-card>
<div class="sat"><svg width="42" height="21"><path d="M0 6 12 2 20 9 9 17 0 13z" fill="#596052"/><path d="M22 0 42 3 35 12 24 8z" fill="#263a2f"/><path d="M26 14 40 10 42 21H21z" fill="#1e2f27"/><path d="m3 20 12-12 9-7M12 0l11 14 5 7" stroke="#80806e" fill="none"/></svg></div>
<div class="z"><i></i><b></b></div>`);

define('chat-button',`<style>:host{display:block;width:66px;height:66px;filter:drop-shadow(0 1px 6px rgba(0,0,0,.25))}svg{display:block}</style>
<svg width="66" height="66" viewBox="0 0 66 66"><circle cx="33" cy="33" r="33" fill="#0a7cff"/><path d="M33 11.200c12.800 0 22 9.200 22 21.300S45.800 53.800 33 53.800c-2.200 0-4.300-.3-6.200-.8l-6 2.200c-1 .4-1.900-.3-1.900-1.200l-.2-4.100C13.800 45.800 11 39.700 11 32.500c0-12.100 9.200-21.300 22-21.300z" fill="#fff"/><path d="m20 38.700 6.400-10.200c1-1.600 3.200-2 4.700-.9l5.200 3.800c.5.4 1.100.4 1.600 0l6.900-5.300c.9-.7 2.100.4 1.500 1.400l-6.500 10.200c-1 1.600-3.200 2-4.700.9l-5.200-3.800c-.5-.4-1.100-.4-1.600 0l-6.800 5.300c-.9.7-2.100-.4-1.500-1.400z" fill="#0a7cff"/></svg>`);

define('salon-page',`<style>:host{display:block;position:relative;width:1896px;height:934px;overflow:hidden}
contact-row{margin-top:91px}salon-map{margin:65px 0 0 15px}chat-button{position:absolute;left:1809px;top:844px}
.edge{position:absolute;left:0;top:78px;width:3px;height:44px;background:linear-gradient(rgba(0,0,0,.07),transparent)}</style>
<site-header></site-header><page-intro></page-intro><contact-row></contact-row><salon-map></salon-map><div class="edge"></div><chat-button></chat-button>`);
</script>
</body>
</html>
